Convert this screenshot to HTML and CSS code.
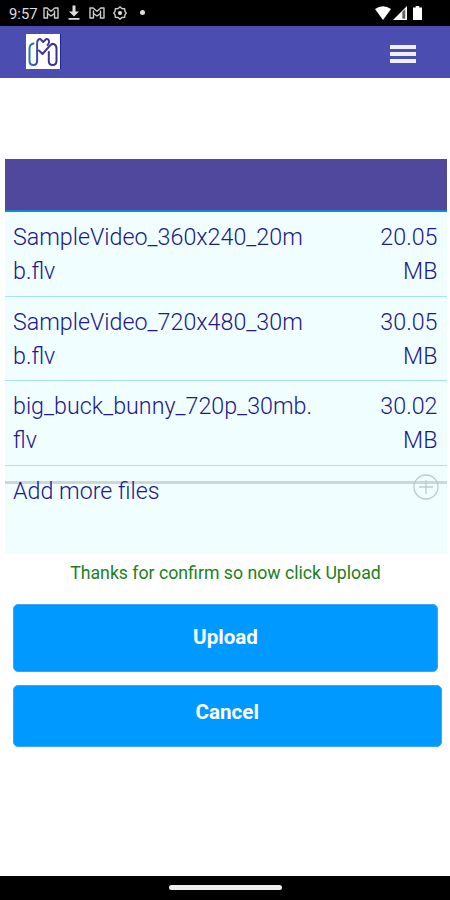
FILE: index.html
```
<!DOCTYPE html>
<html lang="en">
<head>
    <meta charset="UTF-8">
    <meta name="viewport" content="width=device-width, initial-scale=1">
    <title>Upload files</title>
    <link rel="stylesheet" href="styles.css">
</head>
<body>
    <div class="status-bar">
        <div class="status-left">
            <span class="time">9:57</span>
            <svg class="status-m" width="16" height="12" viewBox="0 0 16 12"><path d="M1 1h3.2L8 4.2 11.8 1H15v10h-3.5V6.5L8 9 4.5 6.5V11H1zM4.5 3.5v3M11.5 3.5v3"/></svg>
            <svg class="status-download" width="12" height="15" viewBox="0 0 12 15"><path d="M4.5 0.5h3v6H11L6 11.5 1 6.5h3.5zM0.5 13h11v1.7h-11z"/></svg>
            <svg class="status-m" width="16" height="12" viewBox="0 0 16 12"><path d="M1 1h3.2L8 4.2 11.8 1H15v10h-3.5V6.5L8 9 4.5 6.5V11H1zM4.5 3.5v3M11.5 3.5v3"/></svg>
            <svg class="status-gear" width="14" height="14" viewBox="0 0 14 14"><path d="M7 .8l1.8 1.7 2.8.2.4 2.6L13.2 7 12 8.7l-.4 2.6-2.8.2L7 13.2l-1.8-1.7-2.8-.2L2 8.7.8 7 2 5.3l.4-2.6 2.8-.2z"/><circle class="dot" cx="7" cy="7" r="2.1"/></svg>
            <span class="more-dot"></span>
        </div>
        <div class="status-right">
            <svg width="16" height="14" viewBox="0 0 16 14"><path fill="#fff" d="M0 3Q8-2.6 16 3L8 14z"/></svg>
            <svg width="14" height="14" viewBox="0 0 14 14"><path fill="#fff" d="M0 14L14 0v14z"/><path fill="#666" d="M9.3 5.8L12.3 3v9.8h-3z"/></svg>
            <svg class="battery" width="9" height="14" viewBox="0 0 9 14"><path fill="#fff" d="M2.7 0h3.6v1.5H9V14H0V1.5h2.7z"/></svg>
        </div>
    </div>

    <header class="navbar">
        <div class="logo">
            <svg width="34" height="35" viewBox="0 0 34 35">
                <defs>
                    <linearGradient id="logoColor" x1="0" x2="1">
                        <stop offset="0" stop-color="#2878a8"/>
                        <stop offset=".4" stop-color="#4638a0"/>
                        <stop offset="1" stop-color="#38328c"/>
                    </linearGradient>
                </defs>
                <path d="M7.5 9.5Q3.5 10 3.5 15V27Q3.5 31 7.3 31T11.1 27V9.5Q11.1 5 14.3 5L17.2 8 20 5.2Q22.5 4.6 23 7T21.5 11M13 16.5L16.5 20 24 11.5Q26.3 9 28.5 10.3T30.5 15V27Q30.5 31 26.6 31T22.8 27V18"/>
            </svg>
        </div>
        <button class="menu" aria-label="Menu"><span></span><span></span><span></span></button>
    </header>

    <main class="content">
        <section class="file-list">
            <div class="list-head"></div>
            <div class="file-row">
                <div class="file-name">SampleVideo_360x240_20mb.flv</div>
                <div class="file-size">20.05 MB</div>
            </div>
            <div class="file-row">
                <div class="file-name">SampleVideo_720x480_30mb.flv</div>
                <div class="file-size">30.05 MB</div>
            </div>
            <div class="file-row">
                <div class="file-name">big_buck_bunny_720p_30mb.flv</div>
                <div class="file-size">30.02 MB</div>
            </div>
            <div class="add-row">
                <span>Add more files</span>
                <svg width="26" height="26" viewBox="0 0 26 26"><circle cx="13" cy="13" r="12"/><path d="M13 6v14M6 13h14"/></svg>
            </div>
        </section>
        <p class="message">Thanks for confirm so now click Upload</p>
        <button class="button upload">Upload</button>
        <button class="button cancel">Cancel</button>
    </main>

    <footer class="nav-bar"><span class="handle"></span></footer>
</body>
</html>
```
FILE: styles.css
```
* {
    box-sizing: border-box;
}
body {
    margin: 0;
    height: 900px;
    display: flex;
    flex-direction: column;
    font-family: Roboto, "Liberation Sans", sans-serif;
    background-color: #fff;
    overflow: hidden;
}
svg {
    display: block;
    flex: none;
}

/* phone status bar */
.status-bar {
    height: 25.5px;
    padding: 0 28px 0 9px;
    display: flex;
    justify-content: space-between;
    background-color: #000;
    color: #ddd;
}
.status-left,
.status-right {
    display: flex;
    align-items: center;
}
.time {
    width: 34px;
    padding-top: 2px;
    font-size: 14.8px;
    line-height: 26px;
}
.status-m,
.status-gear {
    fill: none;
    stroke: #ccc;
    stroke-width: 1.4;
    stroke-linejoin: round;
}
.status-download {
    margin: 0 9px;
    fill: #ddd;
}
.status-gear {
    margin-left: 8px;
}
.status-gear .dot {
    fill: #ddd;
    stroke: none;
}
.more-dot {
    width: 5px;
    height: 5px;
    margin-left: 13px;
    border-radius: 50%;
    background-color: #ddd;
}
.status-right {
    gap: 2px;
}
.battery {
    margin-left: 4px;
}

/* header */
.navbar {
    height: 52px;
    padding: 0 34px 0 26px;
    display: flex;
    align-items: center;
    justify-content: space-between;
    background-color: #4c4db0;
}
.logo {
    margin-bottom: 1px;
    background-color: #fff;
    border-right: 1px solid #2222a0;
}
.logo path {
    fill: none;
    stroke: url(#logoColor);
    stroke-width: 2;
    stroke-linecap: round;
    stroke-linejoin: round;
}
.menu {
    width: 26px;
    margin-top: 4px;
    padding: 0;
    display: flex;
    flex-direction: column;
    gap: 3px;
    border: 0;
    background: none;
}
.menu span {
    width: 100%;
    height: 4px;
    background-color: #f0f0fb;
}

/* files */
.content {
    flex: 1;
    padding: 81.5px 3.5px 0 4.5px;
}
.file-list {
    height: 395px;
    background-color: #f0feff;
    color: #20188a;
    font-size: 23.25px;
    font-weight: 300;
    line-height: 34px;
}
.list-head {
    height: 53px;
    background-color: #50489c;
    border-bottom: 2px solid #1685d2;
}
.file-row {
    height: 84.67px;
    padding: 8px 9px 0 8.5px;
    display: flex;
    justify-content: space-between;
    border-bottom: 1.5px solid #abe0fa;
}
.file-name {
    width: 304px;
    word-break: break-all;
}
.file-size {
    width: 70px;
    text-align: right;
}
.add-row {
    padding: 8px 8px 0 8.5px;
    display: flex;
    justify-content: space-between;
    background: linear-gradient(#cbd8da, #cbd8da) 0 15px / 100% 3px no-repeat;
}
.add-row svg {
    fill: none;
    stroke: #bfc9cb;
    stroke-width: 1.3;
}

.message {
    margin: 9px 0 20px;
    text-align: center;
    color: #1b801b;
    font-size: 17.7px;
    line-height: 21px;
}
.button {
    display: block;
    margin-left: 8.5px;
    padding: 0 0 2px;
    border: 1px solid #3da6f5;
    border-radius: 5px;
    background-color: #0099ff;
    color: #fff;
    font-family: inherit;
    font-size: 20.6px;
    font-weight: 700;
}
.upload {
    width: 425px;
    height: 68px;
}
.cancel {
    width: 428.5px;
    height: 62px;
    margin-top: 13px;
    padding-bottom: 8px;
}

/* phone navigation bar */
.nav-bar {
    height: 24.5px;
    display: flex;
    align-items: center;
    justify-content: center;
    background-color: #000;
}
.handle {
    width: 113px;
    height: 5px;
    border-radius: 3px;
    background-color: #eee;
}
```
